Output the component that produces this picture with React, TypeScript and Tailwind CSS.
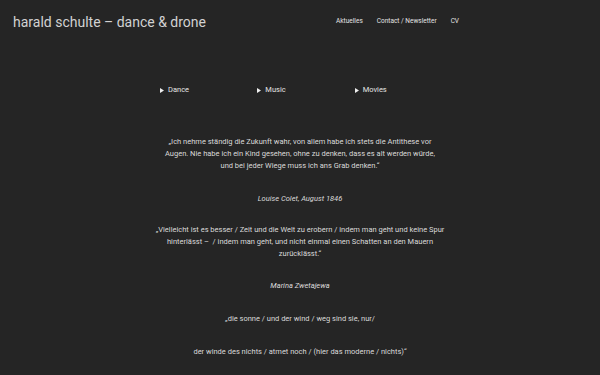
import React from "react";

const Tri = () => (
  <svg width="4" height="5" viewBox="0 0 4 5" className="mr-[4px] inline-block">
    <path d="M0 0 L4 2.5 L0 5 Z" fill="#eeeeee" />
  </svg>
);

export default function App() {
  return (
    <div
      className="min-h-[375px] w-full bg-[#252525] text-[#d4d4d4] antialiased"
      style={{ fontFamily: "Roboto, 'Noto Sans', sans-serif" }}
    >
      <header className="flex items-start justify-between pl-[13px] pr-[141px] pt-[12px]">
        <div className="text-[14px] leading-[20px] text-[#d2d2d2]">harald schulte – dance &amp; drone</div>
        <nav className="flex gap-[14px] pt-[4px] text-[6.5px] leading-[10px] text-[#e4e4e4]">
          <span>Aktuelles</span>
          <span>Contact / Newsletter</span>
          <span>CV</span>
        </nav>
      </header>

      <div className="ml-[calc(50%-140px)] mt-[53px] grid w-[292px] grid-cols-3 text-[7.5px] leading-[10px] text-[#e4e4e4]">
        <div className="flex items-center"><Tri />Dance</div>
        <div className="flex items-center"><Tri />Music</div>
        <div className="flex items-center"><Tri />Movies</div>
      </div>

      <main className="mt-[41px] flex flex-col items-center text-center text-[7.5px] leading-[12px] text-[#dadada]">
        <p className="w-[276px]">
          „Ich nehme ständig die Zukunft wahr, von allem habe ich stets die Antithese vor Augen. Nie habe ich ein Kind gesehen, ohne zu denken, dass es alt werden würde, und bei jeder Wiege muss ich ans Grab denken.“
        </p>
        <p className="mt-[21px] italic">Louise Colet, August 1846</p>
        <p className="mt-[19px] w-[292px]">
          „Vielleicht ist es besser / Zeit und die Welt zu erobern / indem man geht und keine Spur hinterlässt –&nbsp; / indem man geht, und nicht einmal einen Schatten an den Mauern zurücklässt.“
        </p>
        <p className="mt-[20px] italic">Marina Zwetajewa</p>
        <p className="mt-[21px]">„die sonne / und der wind / weg sind sie, nur/</p>
        <p className="mt-[21px]">der winde des nichts / atmet noch / (hier das moderne / nichts)“</p>
      </main>
    </div>
  );
}
